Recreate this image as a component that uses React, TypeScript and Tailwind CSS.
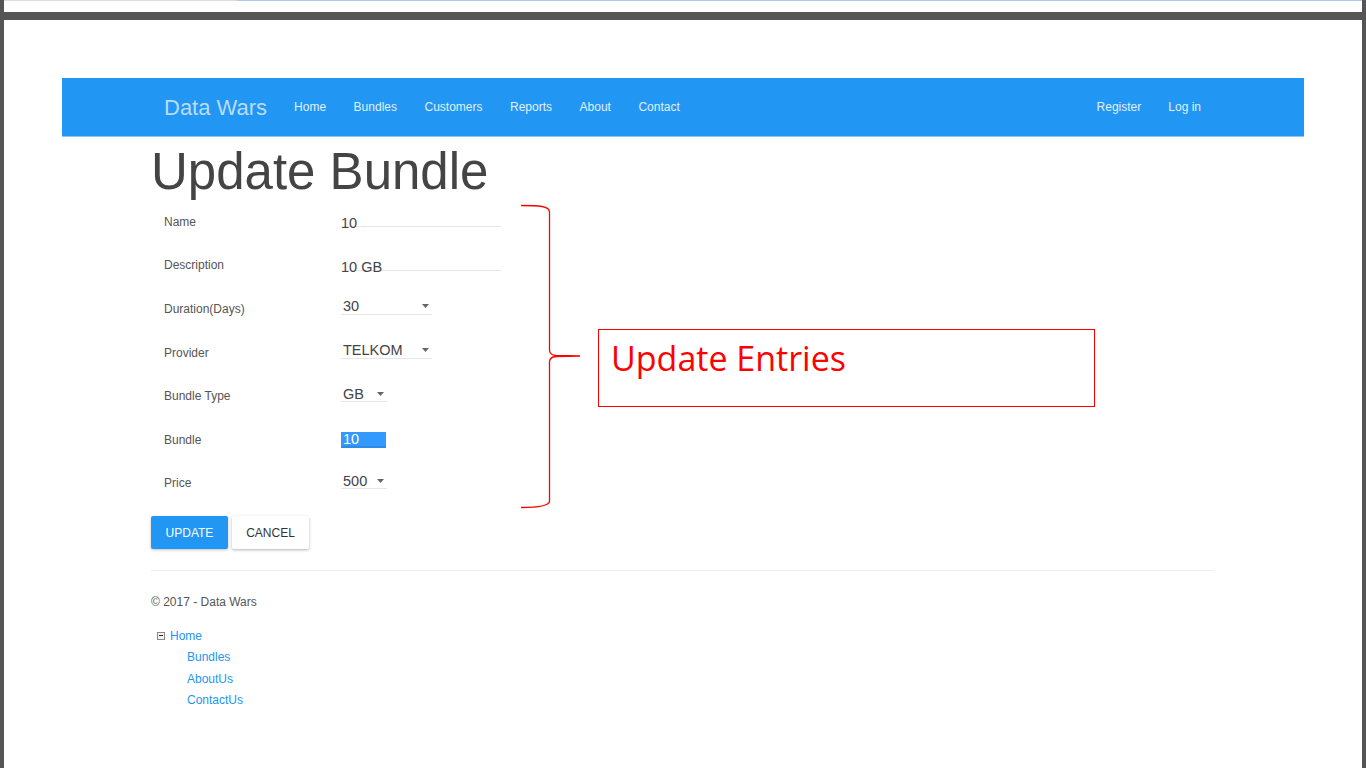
import React from "react";

const navLinks = ["Home", "Bundles", "Customers", "Reports", "About", "Contact"];

function Caret() {
  return (
    <svg width="7" height="4" viewBox="0 0 7 4" className="shrink-0">
      <polygon points="0,0 7,0 3.5,4" fill="#666" />
    </svg>
  );
}

function TextField(props: { value: string }) {
  return (
    <div className="h-[11px] w-[160px] border-b border-[#e6e6e6]">
      <div className="text-[14.5px] leading-[15px] text-[#444] whitespace-nowrap">
        {props.value}
      </div>
    </div>
  );
}

function SelectField(props: { value: string; width: string }) {
  return (
    <div
      className={[
        "flex h-[16px] items-center justify-between border-b border-[#e6e6e6] pl-[2px] pr-[3px] mb-[4px]",
        props.width,
      ].join(" ")}
    >
      <span className="text-[14.5px] leading-[16px] text-[#444]">{props.value}</span>
      <Caret />
    </div>
  );
}

export default function App() {
  const rows: { label: string; control: React.ReactNode }[] = [
    { label: "Name", control: <TextField value="10" /> },
    { label: "Description", control: <TextField value="10 GB" /> },
    { label: "Duration(Days)", control: <SelectField value="30" width="w-[91px]" /> },
    { label: "Provider", control: <SelectField value="TELKOM" width="w-[91px]" /> },
    { label: "Bundle Type", control: <SelectField value="GB" width="w-[46px]" /> },
    {
      label: "Bundle",
      control: (
        <div className="flex h-[16px] w-[45px] items-center border-b-2 border-[#2b8be6] bg-[#3399ff]">
          <span className="pl-[2px] text-[14.5px] leading-[14px] text-white">10</span>
        </div>
      ),
    },
    { label: "Price", control: <SelectField value="500" width="w-[46px]" /> },
  ];

  return (
    <div className="relative min-h-[768px] bg-white font-['Liberation_Sans',Arial,sans-serif]">
      <div className="min-h-[768px] border-x-4 border-[#555]">
        {/* browser chrome remnants */}
        <div className="flex h-px">
          <div className="w-[233px] bg-[#dcdcdc]" />
          <div className="flex-1 bg-[#abc9ea]" />
        </div>
        <div className="h-[11px]" />
        <div className="h-[8px] bg-[#555]" />

        {/* navbar */}
        <nav className="mx-[58px] mt-[58px] flex h-[59px] items-center border-b border-[#8cc5f6] bg-[#2196f3] pl-[102px] pr-[103px]">
          <span className="mr-[27px] text-[22px] text-[#b9dcfa]">Data Wars</span>
          <div className="flex gap-[27.5px] text-[12px] text-[#e2effc]">
            {navLinks.map((l) => (
              <span key={l}>{l}</span>
            ))}
          </div>
          <div className="ml-auto flex gap-[27px] text-[12px] text-[#e2effc]">
            <span>Register</span>
            <span>Log in</span>
          </div>
        </nav>

        {/* body */}
        <div className="ml-[147px] w-[1063px]">
          <h2 className="mt-[7px] text-[51px] leading-[56px] text-[#444]">Update Bundle</h2>

          <div className="flex flex-col">
            {rows.map((r) => (
              <div key={r.label} className="flex h-[43.6px] items-center">
                <div className="w-[190px] pl-[13px] text-[12px] text-[#555]">{r.label}</div>
                {r.control}
              </div>
            ))}
          </div>

          <div className="mt-[11px] flex gap-[4px]">
            <button className="h-[33px] w-[77px] rounded-[2px] bg-[#2196f3] text-[12px] text-white shadow-[0_1px_3px_rgba(0,0,0,0.25)]">
              UPDATE
            </button>
            <button className="h-[33px] w-[77px] rounded-[2px] bg-white text-[12px] text-[#333] shadow-[0_1px_3px_rgba(0,0,0,0.3)]">
              CANCEL
            </button>
          </div>

          <hr className="mt-[21px] border-t border-[#eee]" />

          <footer className="mt-[24px] text-[12px] leading-[14px] text-[#555]">© 2017 - Data Wars</footer>

          {/* site map tree */}
          <div className="mt-[16px] text-[12px] text-[#2196f3]">
            <div className="flex h-[21.5px] items-center pl-[6px]">
              <div className="mr-[5px] flex h-[8px] w-[8px] items-center justify-center border border-[#8a8a8a] bg-[#f3f3f3]">
                <div className="h-px w-[4px] bg-[#222]" />
              </div>
              <span>Home</span>
            </div>
            {["Bundles", "AboutUs", "ContactUs"].map((c) => (
              <div key={c} className="flex h-[21.5px] items-center pl-[36px]">
                {c}
              </div>
            ))}
          </div>
        </div>
      </div>

      {/* annotation overlay */}
      <svg
        className="pointer-events-none absolute left-[515px] top-[200px]"
        width="70"
        height="315"
        viewBox="0 0 70 315"
      >
        <path
          d="M 6 5.5 C 24 5.5 34.5 6 34.5 12 L 34.5 150 Q 34.5 155 41 155.5 L 65 156 L 41 156.5 Q 34.5 157 34.5 162 L 34.5 301 C 34.5 306 24 307.5 6 307.5"
          fill="none"
          stroke="#ff0000"
          strokeWidth="1.3"
        />
      </svg>
      <div className="absolute left-[598px] top-[329px] h-[78px] w-[497px] border border-[#ff0000] pl-[12px] pt-[11px] font-['Open_Sans','Noto_Sans',sans-serif] text-[34px] leading-none text-[#ff0000]">
        Update Entries
      </div>
    </div>
  );
}
